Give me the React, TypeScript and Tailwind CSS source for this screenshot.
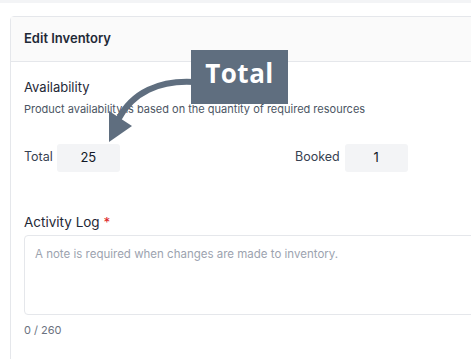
export default function App() {
  return (
    <div className="relative w-[471px] h-[359px] overflow-hidden bg-white" style={{ fontFamily: 'Inter, "Liberation Sans", sans-serif' }}>
      <div className="h-[3px] bg-[#f3f4f6]" />
      <div className="ml-[10px] mt-[13px] w-[540px] h-[400px] border border-[#e5e7eb] rounded-tl-[4px]">
        <div className="h-[45px] bg-[#fafafa] border-b border-[#e5e7eb] flex items-center px-[13px]">
          <h2 className="text-[13px] font-semibold text-[#1f2937]">Edit Inventory</h2>
        </div>
        <div className="px-[13px]">
          <div className="pt-[16px] text-[13px] text-[#1f2937] leading-[18px]">Availability</div>
          <p className="mt-[6px] text-[11px] text-[#4b5563] leading-[14px]">
            Product availability is based on the quantity of required resources
          </p>
          <div className="mt-[28px] flex items-center">
            <div className="flex items-center w-[271px]">
              <span className="text-[12.5px] text-[#374151] mr-[4px] -mt-[2px]">Total</span>
              <div className="w-[63px] h-[28px] rounded-[3px] bg-[#f3f4f6] flex items-center justify-center text-[13px] text-[#111827]">25</div>
            </div>
            <div className="flex items-center">
              <span className="text-[12.5px] text-[#374151] mr-[5px] -mt-[2px]">Booked</span>
              <div className="w-[63px] h-[28px] rounded-[3px] bg-[#f3f4f6] flex items-center justify-center text-[13px] text-[#111827]">1</div>
            </div>
          </div>
          <div className="mt-[41px] text-[13.5px] text-[#1f2937] leading-[18px]">
            Activity Log <span className="text-[#dc2626]">*</span>
          </div>
          <div className="mt-[4px] h-[80px] border border-[#e5e7eb] rounded-[4px] px-[10px] pt-[10px] text-[11.5px] text-[#9ca3af]">
            A note is required when changes are made to inventory.
          </div>
          <div className="mt-[7px] text-[11px] text-[#6b7280]">0 / 260</div>
        </div>
      </div>

      <svg className="absolute left-0 top-0" width="471" height="359" viewBox="0 0 471 359">
        <path d="M194 82 C160 80 132 92 118 120" fill="none" stroke="#5f6e7f" strokeWidth="6" />
        <polygon points="109,111 132,126 109,142" fill="#5f6e7f" />
      </svg>
      <div className="absolute left-[191px] top-[50px] w-[97px] h-[54px] bg-[#5f6e7f] flex items-center justify-center pb-[8px]">
        <span className="text-white text-[26px] font-bold tracking-[0.5px]" style={{ fontFamily: '"Open Sans", sans-serif' }}>Total</span>
      </div>
    </div>
  )
}
